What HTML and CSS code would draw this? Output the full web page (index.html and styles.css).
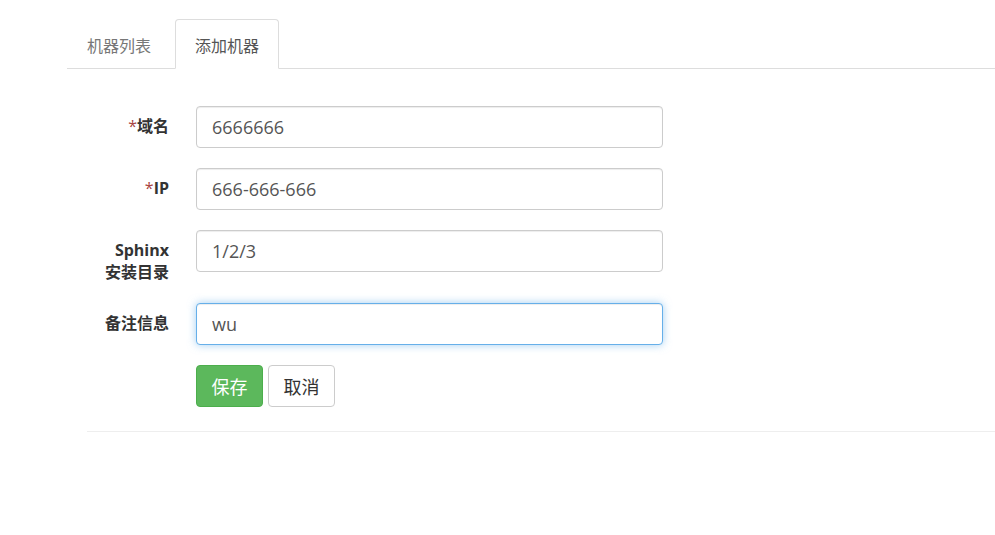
FILE: index.html
```html
<!DOCTYPE html>
<html lang="zh-CN">
<head>
<meta charset="utf-8">
<title>添加机器</title>
<link rel="stylesheet" href="styles.css">
</head>
<body>
<div class="page">
  <ul class="tabs">
    <li class="tab"><a href="#">机器列表</a></li>
    <li class="tab active"><a href="#">添加机器</a></li>
  </ul>
  <div class="panel">
    <form class="form">
      <div class="row">
        <label class="label"><span class="req">*</span>域名</label>
        <input class="input" type="text" value="6666666">
      </div>
      <div class="row">
        <label class="label"><span class="req">*</span>IP</label>
        <input class="input" type="text" value="666-666-666">
      </div>
      <div class="row">
        <label class="label">Sphinx<br>安装目录</label>
        <input class="input" type="text" value="1/2/3">
      </div>
      <div class="row">
        <label class="label">备注信息</label>
        <input class="input focus" type="text" value="wu">
      </div>
      <div class="row actions">
        <button type="button" class="btn btn-success">保存</button>
        <button type="button" class="btn btn-default">取消</button>
      </div>
    </form>
  </div>
</div>
</body>
</html>
```

FILE: styles.css
```css
html, body {
  margin: 0;
  padding: 0;
  background: #fff;
}
body {
  font-family: "Open Sans", "Noto Sans CJK SC", sans-serif;
  color: #333;
}
.page {
  padding-top: 19px;
  padding-left: 67px;
}
.tabs {
  list-style: none;
  margin: 0;
  padding: 0;
  display: flex;
  border-bottom: 1px solid #ddd;
}
.tab {
  margin-right: 4px;
  margin-bottom: -1px;
}
.tab a {
  display: block;
  padding: 13px 19px 11px;
  line-height: 24px;
  font-size: 16px;
  color: #777;
  text-decoration: none;
  border: 1px solid transparent;
  border-radius: 4px 4px 0 0;
  font-family: "Noto Sans CJK SC", sans-serif;
}
.tab.active a {
  color: #555;
  background: #fff;
  border-color: #ddd #ddd transparent;
}
.panel {
  padding-left: 20px;
}
.form {
  padding-top: 37px;
  padding-bottom: 24px;
  border-bottom: 1px solid #eee;
}
.row {
  display: flex;
  align-items: flex-start;
  gap: 27px;
  margin-bottom: 20px;
}
.row.actions {
  padding-left: 109px;
  gap: 5px;
  margin-bottom: 0;
}
.label {
  width: 82px;
  flex: none;
  text-align: right;
  font-weight: bold;
  font-size: 16px;
  line-height: 22px;
  padding-top: 9px;
  color: #333;
}
.req {
  color: #a94442;
  font-weight: normal;
}
.input {
  box-sizing: border-box;
  width: 467px;
  height: 42px;
  padding: 0 15px;
  font-family: "Open Sans", "Noto Sans CJK SC", sans-serif;
  font-size: 18px;
  color: #555;
  background: #fff;
  border: 1px solid #ccc;
  border-radius: 4px;
  box-shadow: inset 0 1px 1px rgba(0,0,0,.075);
  outline: none;
}
.input.focus {
  border-color: #66afe9;
  box-shadow: inset 0 1px 1px rgba(0,0,0,.075), 0 0 8px rgba(102,175,233,.6);
}
.btn {
  box-sizing: border-box;
  height: 42px;
  padding: 0 14.5px;
  font-size: 18px;
  font-family: "Noto Sans CJK SC", sans-serif;
  border: 1px solid transparent;
  border-radius: 4px;
  cursor: pointer;
}
.btn-success {
  background: #5cb85c;
  border-color: #4cae4c;
  color: #fff;
}
.btn-default {
  background: #fff;
  border-color: #ccc;
  color: #333;
}
```
